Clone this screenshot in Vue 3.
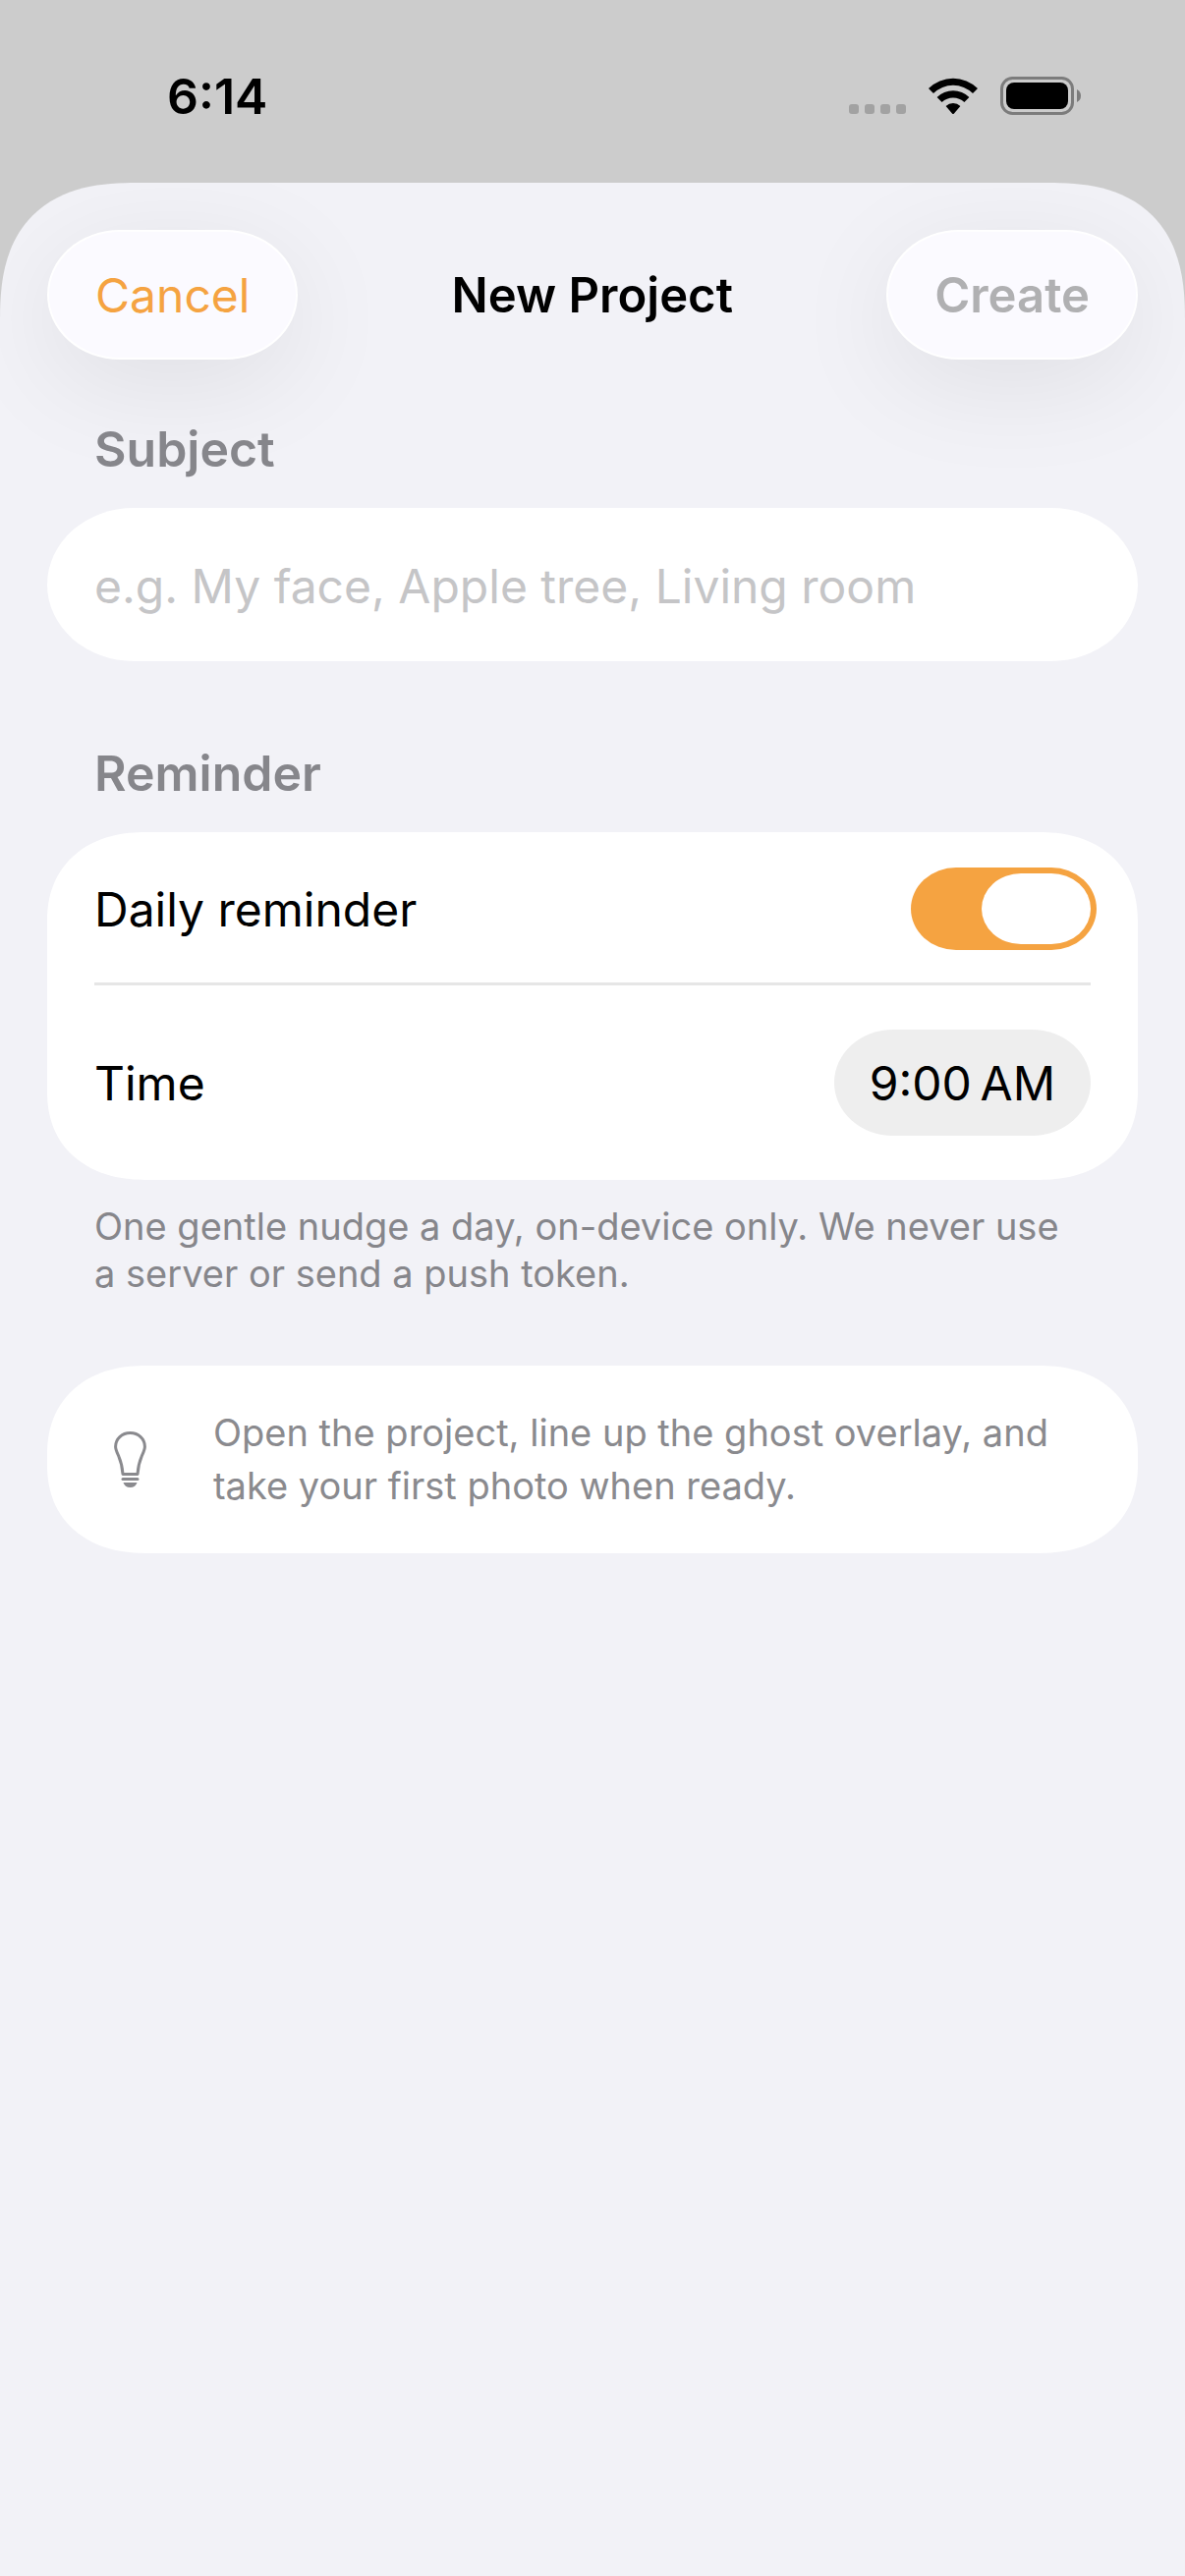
<script setup>
import { ref } from 'vue'

const subject = ref('')
const reminderOn = ref(true)
const time = ref('9:00\u202fAM')
</script>

<template>
  <div class="screen">
    <header class="status">
      <span class="clock">6:14</span>
      <div class="indicators">
        <svg class="cellular" width="58" height="38" viewBox="0 0 58 38" aria-hidden="true">
          <rect v-for="n in 4" :key="n" :x="(n - 1) * 16" y="27" width="10" height="10" rx="3" fill="#a2a2a2" />
        </svg>
        <svg class="wifi" width="52" height="38" viewBox="0 0 52 38" aria-hidden="true">
          <path d="M1 11 A35.5 35.5 0 0 1 51 11 L46 16 A28.5 28.5 0 0 0 6 16 Z" />
          <path d="M9.600 20 A23.500 23.500 0 0 1 42.400 20 L37.400 25 A16.500 16.500 0 0 0 14.600 25 Z" />
          <path d="M18.600 29 A10.800 10.800 0 0 1 33.400 29 L27 36.500 Q26 37.500 25 36.500 Z" />
        </svg>
        <svg class="battery" width="82" height="39" viewBox="0 0 82 39" aria-hidden="true">
          <rect x="1.500" y="1.500" width="72" height="36" rx="11" fill="none" stroke="#7c7c7c" stroke-width="3" />
          <rect x="6" y="6" width="63" height="27" rx="8" />
          <path d="M78 13 Q82 15 82 19.500 Q82 24 78 26 Z" fill="#7c7c7c" />
        </svg>
      </div>
    </header>

    <main class="sheet">
      <div class="toolbar">
        <button type="button" class="pill cancel">Cancel</button>
        <h1 class="title">New Project</h1>
        <button type="button" class="pill create" :disabled="!subject">Create</button>
      </div>

      <section class="group">
        <label class="heading" for="subject">Subject</label>
        <div class="card field-card">
          <input id="subject" v-model="subject" class="field" type="text" placeholder="e.g. My face, Apple tree, Living room" />
        </div>
      </section>

      <section class="group">
        <h2 class="heading">Reminder</h2>
        <div class="card">
          <div class="row toggle-row">
            <label for="daily">Daily reminder</label>
            <input id="daily" v-model="reminderOn" class="switch" type="checkbox" role="switch" />
          </div>
          <hr class="divider" />
          <div class="row time-row">
            <label for="time">Time</label>
            <button id="time" type="button" class="time">{{ time }}</button>
          </div>
        </div>
        <p class="footnote">One gentle nudge a day, on-device only. We never use a server or send a push token.</p>
      </section>

      <section class="card tip">
        <svg class="bulb" width="33" height="57" viewBox="0 0 33 57" aria-hidden="true">
          <path
            d="M9 43.500 C8.500 36 7.500 31.500 4.700 25 C2.600 20.500 1.600 18.500 1.600 15.500 C1.600 7.500 8 1.600 16.500 1.600 C25 1.600 31.400 7.500 31.400 15.500 C31.400 18.500 30.400 20.500 28.300 25 C25.500 31.500 24.500 36 24 43.500 Z"
            fill="none"
            stroke="#8a8a8e"
            stroke-width="3"
            stroke-linejoin="round"
          />
          <rect x="7.500" y="47" width="18" height="3" rx="1.500" fill="#8a8a8e" />
          <path d="M9.500 52 H23.500 Q22 57 16.500 57 Q11 57 9.500 52 Z" fill="#8a8a8e" />
        </svg>
        <p class="tip-text">Open the project, line up the ghost overlay, and take your first photo when ready.</p>
      </section>
    </main>
  </div>
</template>

<style>
body {
  margin: 0;
  background: #cccccc;
}
</style>

<style scoped>
.screen {
  display: flex;
  flex-direction: column;
  min-height: 100vh;
  background: #cccccc;
  color: #000;
  font-family: Inter, 'Liberation Sans', sans-serif;
  font-size: 48px;
  line-height: 60px;
}

h1,
h2,
p {
  margin: 0;
}

button,
input {
  margin: 0;
  border: 0;
  padding: 0;
  font: inherit;
  color: inherit;
}

.status {
  display: flex;
  align-items: center;
  justify-content: space-between;
  box-sizing: border-box;
  height: 186px;
  padding: 9px 106px 0 170px;
}

.clock {
  font-size: 50px;
  font-weight: 600;
}

.indicators {
  display: flex;
  align-items: center;
  gap: 22px;
}

.sheet {
  flex: 1;
  overflow: hidden;
  box-sizing: border-box;
  padding: 48px 48px 96px;
  border-radius: 114px 114px 0 0;
  background: #f2f2f7;
}

.toolbar {
  display: flex;
  align-items: center;
  justify-content: space-between;
}

.pill {
  box-sizing: border-box;
  height: 132px;
  padding: 2px 47px 0;
  border: 2px solid #fff;
  border-radius: 74px / 66px;
  background: #fbfaff;
  box-shadow: 0 24px 110px rgba(0, 0, 0, 0.08);
}

.cancel {
  color: #f5a341;
}

.create {
  color: #b0b0b2;
  font-size: 49px;
  font-weight: 600;
}

.title {
  padding-top: 2px;
  font-size: 49px;
  font-weight: 600;
}

.group {
  margin-bottom: 70px;
}

.toolbar + .group {
  margin-top: 61px;
  margin-bottom: 84px;
}

/* Keeps section text above the toolbar buttons' wide shadows */
.group,
.tip {
  position: relative;
}

.heading {
  display: block;
  margin: 0 48px 30px;
  color: #86868b;
  font-size: 50px;
  font-weight: 600;
}

.card {
  border-radius: 84px;
  background: #fff;
}

.field {
  display: block;
  box-sizing: border-box;
  width: 100%;
  height: 156px;
  padding: 2px 48px 0;
  background: transparent;
  outline: 0;
}

.field::placeholder {
  color: #c5c5c7;
  opacity: 1;
}

.row {
  display: flex;
  align-items: center;
  justify-content: space-between;
  box-sizing: border-box;
  padding: 0 48px;
}

.row label {
  padding-top: 2px;
}

.toggle-row {
  height: 153px;
  padding-top: 3px;
  padding-right: 42px;
}

.time-row {
  height: 198px;
}

.divider {
  height: 3px;
  margin: 0 48px;
  border: 0;
  background: #e6e6e6;
}

.switch {
  display: flex;
  box-sizing: border-box;
  width: 189px;
  height: 84px;
  padding: 6px;
  border-radius: 46px / 42px;
  background: #e9e9ea;
  appearance: none;
}

.switch::before {
  width: 111px;
  height: 72px;
  border-radius: 40px / 36px;
  background: #fff;
  content: '';
}

.switch:checked {
  justify-content: flex-end;
  background: #f5a341;
}

.time {
  height: 108px;
  padding: 2px 36px 0;
  border-radius: 60px / 54px;
  background: #eeeeee;
}

.footnote {
  margin: 23px 72px 0 48px;
  color: #86868b;
  font-size: 38px;
  line-height: 48px;
}

.tip {
  display: flex;
  align-items: center;
  gap: 68px;
  padding: 41px 48px 42px 68px;
}

.bulb {
  flex: none;
}

.tip-text {
  color: #8a8a8e;
  font-size: 38px;
  line-height: 54px;
}

/* Continuous corners where the browser can draw them */
@supports (corner-shape: superellipse(1.3)) {
  .sheet {
    border-radius: 140px 140px 0 0;
    corner-shape: superellipse(1.35);
  }

  .card {
    border-radius: 100px / 90px;
    corner-shape: superellipse(1.15);
  }
}

.field-card {
  border-radius: 88px / 78px;
  corner-shape: round;
}
</style>
